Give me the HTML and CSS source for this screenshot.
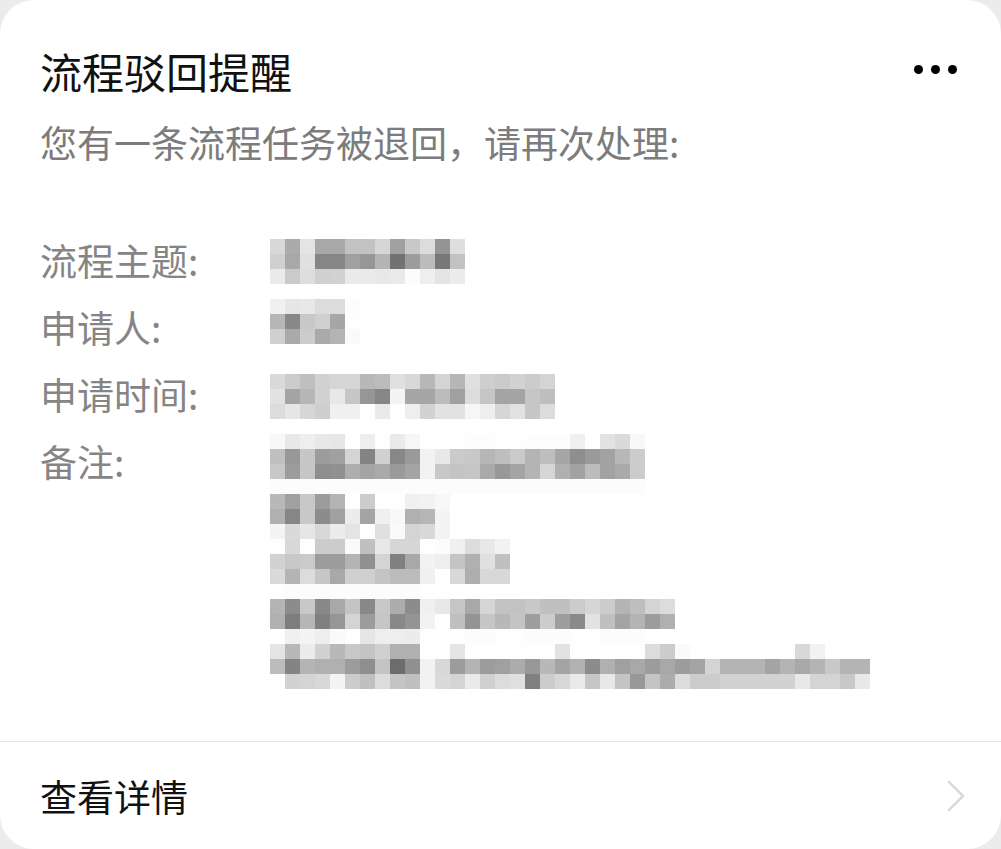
FILE: index.html
```html
<!DOCTYPE html>
<html lang="zh-CN">
<head>
    <meta charset="UTF-8">
    <meta name="viewport" content="width=device-width, initial-scale=1.0">
    <title>流程驳回提醒</title>
    <link rel="stylesheet" href="styles.css">
</head>
<body>
    <div class="card">
        <div class="card-body">
            <div class="card-head">
                <h1 class="card-title">流程驳回提醒</h1>
                <button class="more-btn" aria-label="更多">
                    <span></span><span></span><span></span>
                </button>
            </div>
            <p class="card-desc">您有一条流程任务被退回，请再次处理:</p>

            <dl class="fields">
                <div class="field">
                    <dt>流程主题:</dt>
                    <dd class="mosaic" data-block="subject"></dd>
                </div>
                <div class="field">
                    <dt>申请人:</dt>
                    <dd class="mosaic" data-block="applicant"></dd>
                </div>
                <div class="field">
                    <dt>申请时间:</dt>
                    <dd class="mosaic" data-block="time"></dd>
                </div>
                <div class="field">
                    <dt>备注:</dt>
                    <dd class="mosaic" data-block="remark"></dd>
                </div>
            </dl>
        </div>

        <a class="card-foot" href="#">
            <span>查看详情</span>
            <svg class="chevron" width="20" height="32" viewBox="0 0 20 32">
                <path d="M3 2 L17 16 L3 30" fill="none" stroke="#d9d9d9" stroke-width="2.5" stroke-linecap="round" stroke-linejoin="round"/>
            </svg>
        </a>
    </div>

    <script>
        // Blurred (pixelated) field values, 15px cells, grey levels as hex pairs
        const blocks = {
            subject: { top: 11, rows: [
                'd8abe4a8a8c2c2d6a0c8dc94df',
                'd0a8e08686a096b4729cbc78c2',
                'eacaded0d2eaeae8eafceee4ec'
            ]},
            applicant: { top: 4, rows: [
                'f0e6e8dcdcfd',
                'b688c8d0a6fe',
                'd0aaccaab4fa'
            ]},
            time: { top: 12, rows: [
                'daccc0d2d6d6b8bce0d8b8d4b6e0cecad2ccd4',
                'e2a4b6d2e8c69686f4a6a6bca0dcc6a4a4c6be',
                'dce6d6cef0f0feeafeeed2e2e2f6eed6e2c6dc'
            ]},
            remark: { top: 5, rows: [
                'f8e8eee8e6feeefeeaf6fefefefdfdfefefdfdfdf0fee2daf8',
                'c098c69ca0d484d0889af2e8cac8b6becab4bea68e9aa2b8cc',
                'c89cc68e90aea4aa9aa4f2c8c4c6aa98a4b4d6b0a2bca2aacc',
                'fcfcfcfcfcfcfcfcfcfcfcfcfcfcfcfcfcfcfcfcfcfcfcfcfc',
                'b8a0c89cb4fecc fefef0f2f8',
                'b086c88ca0eca4f0f8b0b6f4',
                'f4dae6d8ece4fee0fad4d8f4',
                'fed8fecccc fac0e8d6d6fefcf0dce8f2',
                'd2c8ca9c9cb490d480a8f2eec4b0e0c0',
                'dab4dcc6a8d0d0c4bcbcf0fed8aed8d8',
                'fefcfcfcfcfcfcfcfcfcfe',
                'b48cc888a8c488c8ac8cf0e8c6a8d6c2c2c8c0c0ccd6ccb4bed4dc',
                'b07eb68096d49cc68894f2fec094c6b8c49ecc9e8ae2c0a4b49cb0',
                'fef0f4eefafee6eeeeecfefefefcfcfefefcfcfcfefefcfcfcfefe',
                'e4b8ecd2b8c8c4d0b0b0 fefee4fefefefefefee2 fefefefefedcccfafe fefefefefefed8f2fefefe',
                'bc84b4b0b09c8ec46c90f2d89cb49ca0ac98b8a4b28cb0a0a89ca89ca4d4b4b4b4a4b4a8b4c8b4b4',
                'fed2d4d8f4ccc0dcc4c0f2dad4ead0dce080ccd8eac6e8c498c4acdccccc d2d2d2d2d2e8d4d4c8e8'
            ]}
        };

        document.querySelectorAll('.mosaic').forEach(el => {
            const block = blocks[el.dataset.block];
            el.style.marginTop = block.top + 'px';
            block.rows.forEach(str => {
                const hex = str.replace(/\s/g, '');
                const row = document.createElement('div');
                row.className = 'mosaic-row';
                for (let i = 0; i + 1 < hex.length; i += 2) {
                    const v = parseInt(hex.substr(i, 2), 16);
                    const cell = document.createElement('span');
                    cell.style.background = `rgb(${v}, ${v}, ${v})`;
                    row.appendChild(cell);
                }
                el.appendChild(row);
            });
        });
    </script>
</body>
</html>
```

FILE: styles.css
```css
:root {
    --page-bg: #ececec;
    --card-bg: #ffffff;
    --text-primary: #111111;
    --text-secondary: #7c7c7c;
    --text-label: #858585;
    --divider: #e6e6e6;
}

* {
    margin: 0;
    padding: 0;
    box-sizing: border-box;
}

body {
    font-family: "Noto Sans CJK SC", "Noto Sans", sans-serif;
    background: var(--page-bg);
    color: var(--text-primary);
}

.card {
    width: 1001px;
    height: 849px;
    background: var(--card-bg);
    border-radius: 34px;
    overflow: hidden;
    display: flex;
    flex-direction: column;
}

.card-body {
    flex: 1;
    padding: 46px 44px 50px 40px;
}

.card-head {
    display: flex;
    justify-content: space-between;
    align-items: center;
}

.card-title {
    font-size: 42px;
    line-height: 50px;
    font-weight: 400;
    color: var(--text-primary);
}

/* three-dot menu */
.more-btn {
    display: flex;
    gap: 8px;
    background: none;
    border: none;
    padding: 0;
    margin-top: -4px;
    cursor: pointer;
}

.more-btn span {
    width: 9px;
    height: 9px;
    border-radius: 50%;
    background: #000;
}

.card-desc {
    margin-top: 21px;
    font-size: 37px;
    line-height: 50px;
    color: var(--text-secondary);
}

.fields {
    margin-top: 61px;
}

.field {
    display: flex;
    min-height: 67px;
}

.field dt {
    width: 230px;
    flex-shrink: 0;
    font-size: 37px;
    line-height: 64px;
    color: var(--text-label);
}

.field dd {
    margin: 0;
}

.mosaic-row {
    display: flex;
    height: 15px;
}

.mosaic-row span {
    width: 15px;
    height: 15px;
}

.card-foot {
    height: 108px;
    border-top: 1px solid var(--divider);
    padding: 0 35px 0 40px;
    display: flex;
    justify-content: space-between;
    align-items: center;
    font-size: 37px;
    color: var(--text-primary);
    text-decoration: none;
}

.chevron {
    display: block;
}
```
